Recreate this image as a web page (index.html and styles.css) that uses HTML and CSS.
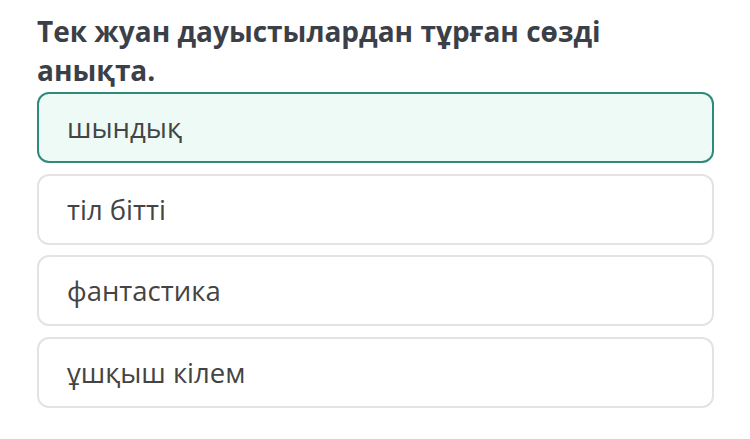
FILE: index.html
```html
<!DOCTYPE html>
<html>
<head>
<meta charset="utf-8">
<link rel="stylesheet" href="styles.css">
</head>
<body>
<div class="quiz">
  <h1 class="question">Тек жуан дауыстылардан тұрған сөзді анықта.</h1>
  <div class="options">
    <div class="option selected">шындық</div>
    <div class="option">тіл бітті</div>
    <div class="option">фантастика</div>
    <div class="option">ұшқыш кілем</div>
  </div>
</div>
</body>
</html>
```
FILE: styles.css
```css
html, body {
  margin: 0;
  padding: 0;
  background: #ffffff;
}
.quiz {
  width: 677px;
  padding: 12px 0 0 37px;
  font-family: "Open Sans", "Noto Sans", sans-serif;
}
.question {
  margin: 0 0 3px 0;
  font-size: 28px;
  line-height: 39px;
  font-weight: 700;
  color: #3b3f48;
  width: 620px;
}
.options {
  display: flex;
  flex-direction: column;
  gap: 10.6px;
  margin-top: -1px;
}
.option {
  box-sizing: border-box;
  height: 71px;
  border: 2px solid #e3e3e3;
  border-radius: 12px;
  padding: 0 0 0 28px;
  display: flex;
  align-items: center;
  font-size: 27.5px;
  color: #444444;
  background: #ffffff;
}
.option.selected {
  border-color: #2f8a7c;
  background: #eefaf5;
}
```
